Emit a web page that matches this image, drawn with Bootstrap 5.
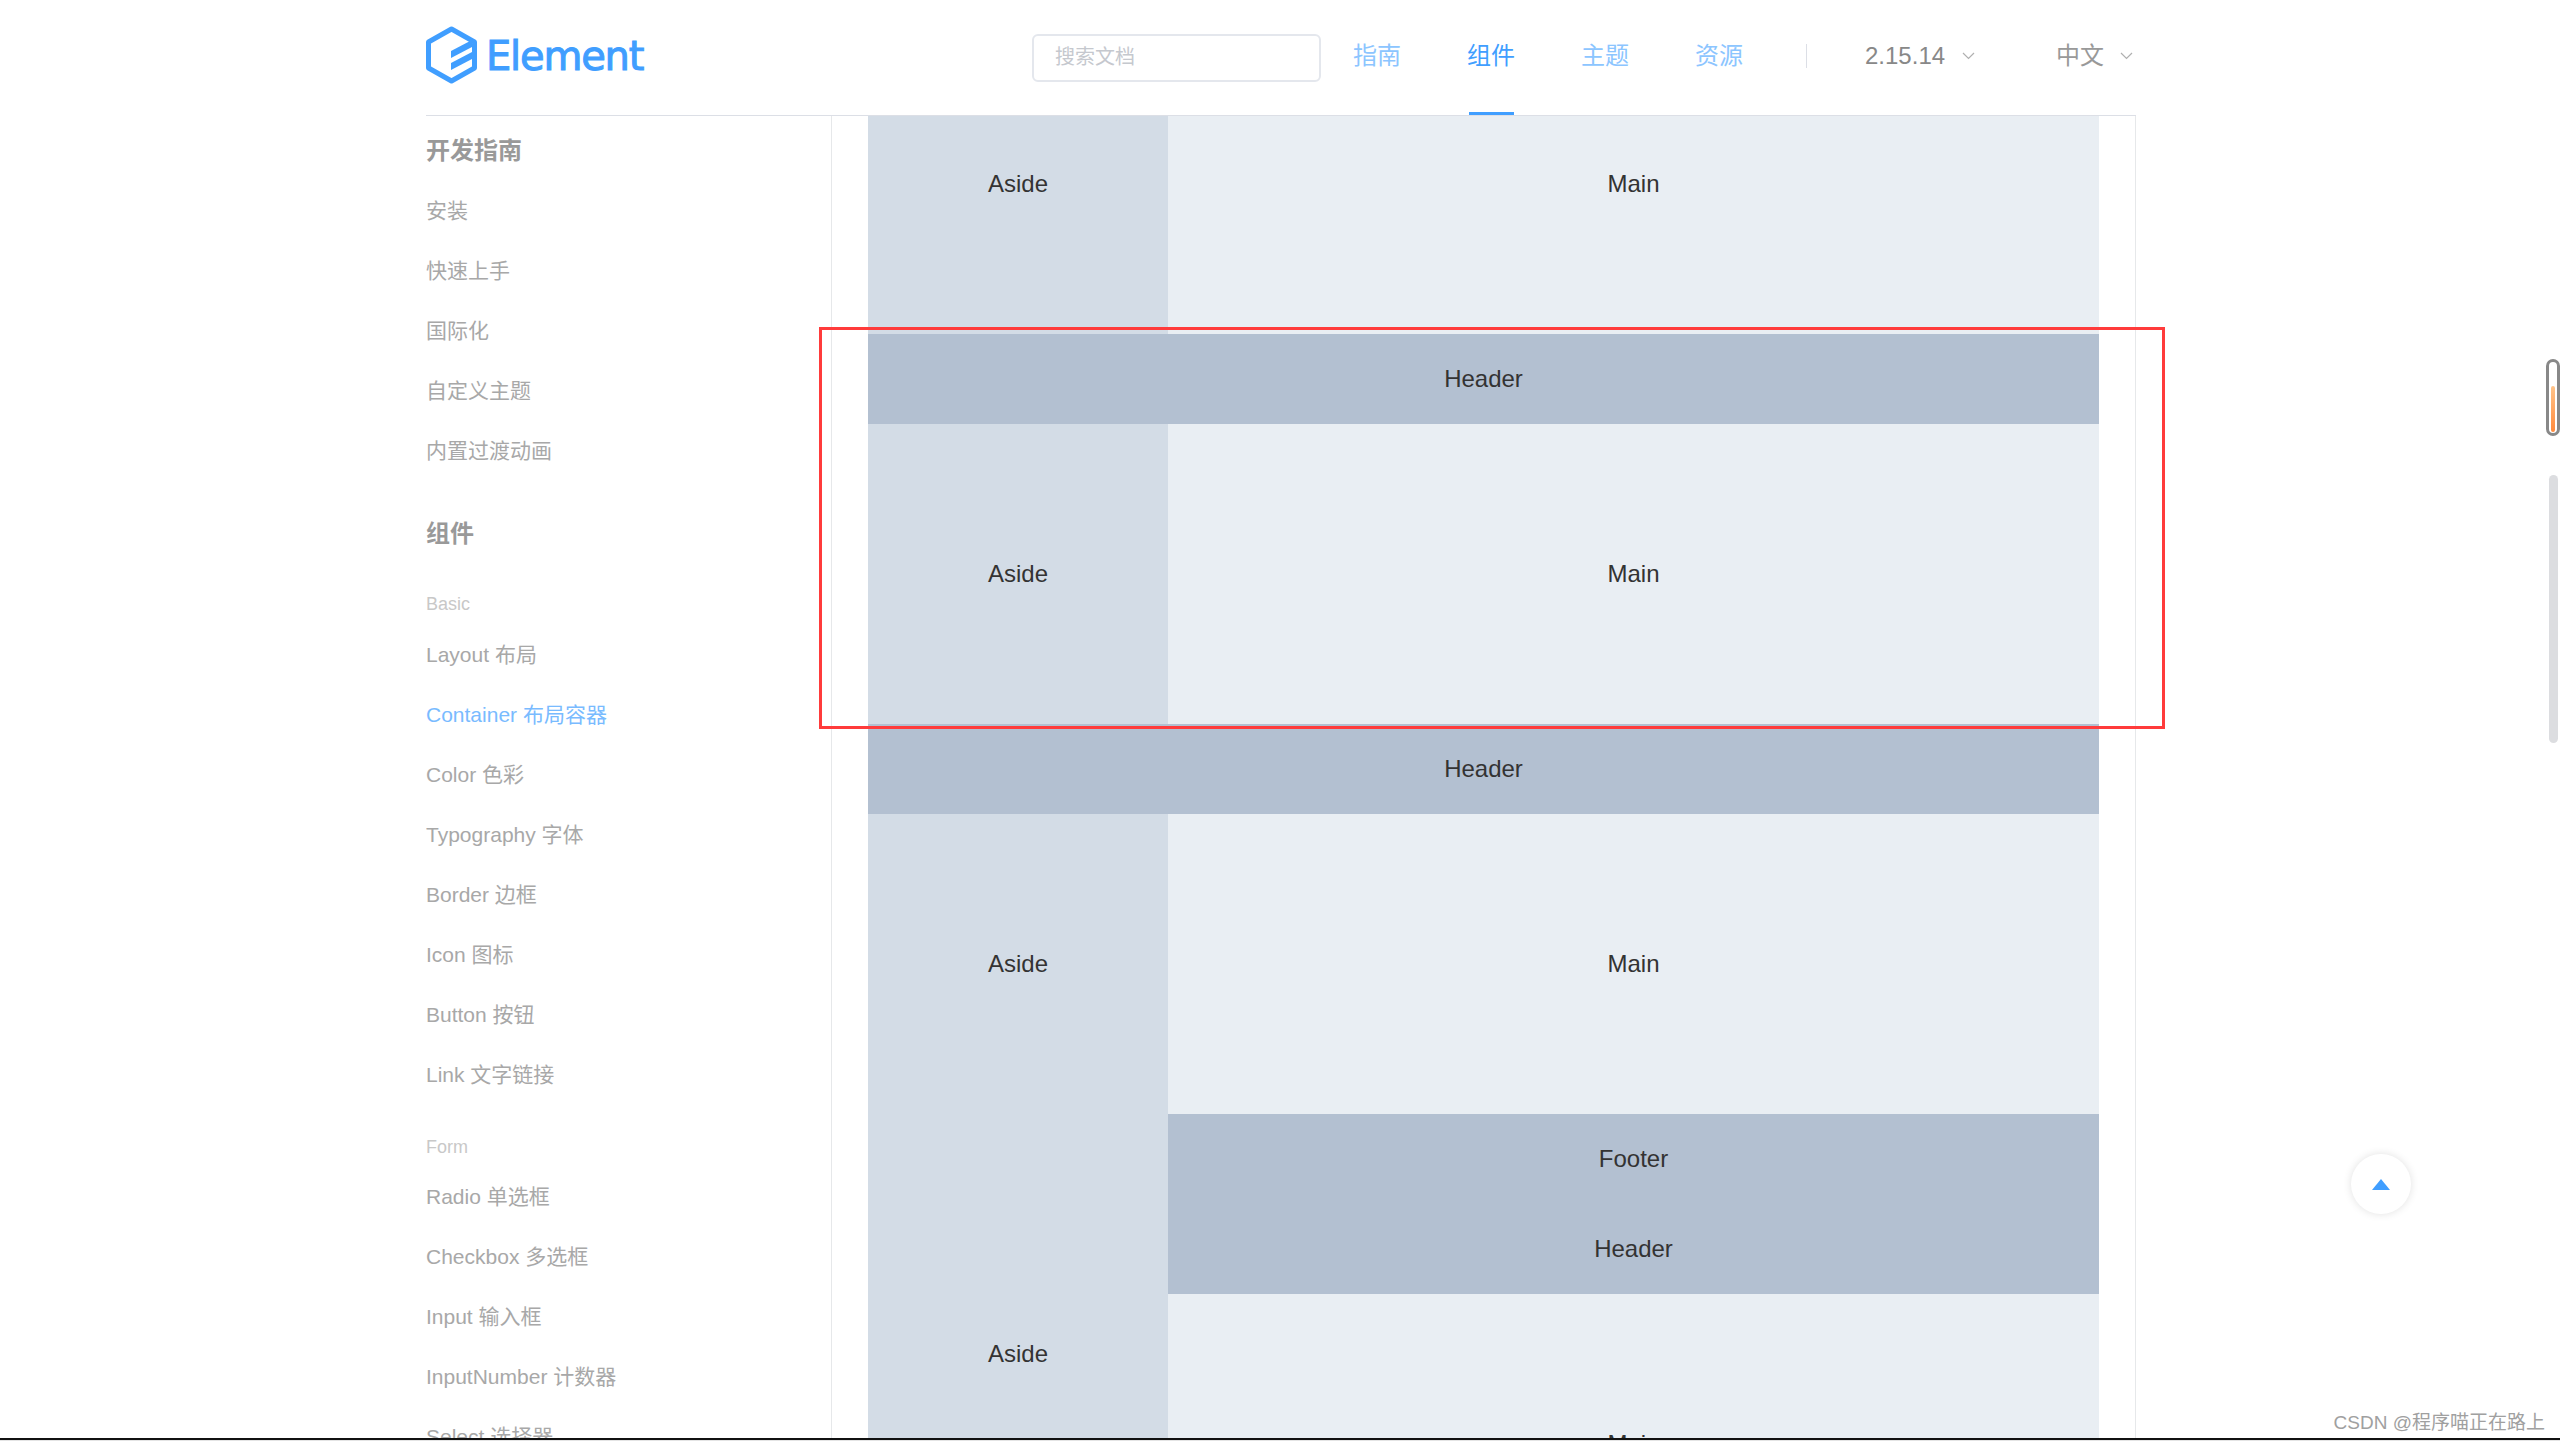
<!DOCTYPE html>
<html lang="zh-CN">
<head>
    <meta charset="UTF-8">
    <title>Element - Container 布局容器</title>
    <link rel="stylesheet" href="https://cdn.jsdelivr.net/npm/bootstrap@5.3.0/dist/css/bootstrap.min.css">
    <style>
        html, body { height: 100%; overflow: hidden; }
        body {
            position: relative;
            background: #fff;
            color: #333;
            font-family: "Liberation Sans", "Noto Sans CJK SC", sans-serif;
            font-size: 24px;
        }
        .el-page { height: 1441px; }
        .el-wrap { width: 1710px; margin-left: 426px; }

        /* top bar */
        .el-top { height: 116px; border-bottom: 1px solid #dcdfe6; }
        .el-logo { width: 606px; }
        .el-logo svg { margin-bottom: 5px; }
        .el-logo-text {
            font-family: "DejaVu Sans", sans-serif;
            font-size: 40px;
            line-height: 1;
            letter-spacing: -1.2px;
            color: #409eff;
            -webkit-text-stroke: 1px #409eff;
            margin-left: 9px;
            margin-bottom: 3px;
        }
        .el-search.form-control {
            width: 289px;
            height: 48px;
            padding: 0 21px;
            font-size: 20px;
            border: 2px solid #e4e7ed;
            border-radius: 6px;
            margin-right: 32px;
        }
        .el-search.form-control::placeholder { color: #c5c8ce; opacity: 1; }
        .el-nav { gap: 66px; margin-right: 63px; }
        .el-nav a { display: block; color: #8cc5ff; text-decoration: none; line-height: 111px; padding-bottom: 4px; position: relative; }
        .el-nav a.el-on { color: #409eff; }
        .el-nav a.el-on::after {
            content: "";
            position: absolute;
            left: 2px;
            right: 1px;
            bottom: 0;
            height: 3px;
            background: #409eff;
        }
        .el-sep { width: 1px; height: 24px; background: #dcdfe6; margin-right: 58px; margin-bottom: 3px; }
        .el-ver { color: #888; gap: 17px; margin-bottom: 3px; }
        .el-lang { color: #999; gap: 16px; margin-left: 81px; margin-bottom: 3px; }

        /* body */
        .el-body { height: 1322px; overflow: hidden; }
        .el-side { width: 406px; flex: none; border-right: 1px solid #e6e8ea; }
        .el-side h5 { font-size: 24px; font-weight: 700; line-height: 60px; color: #999; margin: 0; }
        .el-side h5.el-first { margin-top: 5px; }
        .el-side h5.el-next { margin-top: 23px; }
        .el-side a { display: block; font-size: 21px; line-height: 60px; color: #a8a8a8; text-decoration: none; }
        .el-side a.el-on { color: #79bbff; }
        .el-group { font-size: 18px; line-height: 30px; color: #c8c8c8; margin: 25px 0 6px; }
        .el-group.el-form { margin: 27px 0 5px; }
        .el-content { width: 1304px; flex: none; padding: 0 36px; border-right: 1px solid #e6e8ea; }
        .el-scroll { margin-top: -82px; }
        .el-h, .el-f { height: 90px; line-height: 90px; background: #b3c0d1; text-align: center; }
        .el-a { width: 300px; flex: none; line-height: 300px; background: #d3dce6; text-align: center; }
        .el-m { flex: 1 1 auto; height: 300px; line-height: 300px; background: #e9eef3; text-align: center; }

        /* bottom edge of the capture */
        .el-edge { height: 3px; border-top: 2px solid #111; background: #e4e4e4; }

        /* things lying over the page */
        .el-mark { position: absolute; left: 819px; top: 327px; width: 1346px; height: 402px; border: 3px solid #ff3b3b; pointer-events: none; }
        .el-up {
            position: absolute;
            left: 2351px;
            top: 1154px;
            width: 60px;
            height: 60px;
            background: #fff;
            box-shadow: 0 0 9px rgba(0, 0, 0, .12);
        }
        .el-wm { position: absolute; right: 15px; top: 1411px; font-size: 19px; line-height: 24px; color: #a0a0a0; }
        .el-therm {
            position: absolute;
            left: 2546px;
            top: 359px;
            width: 14px;
            height: 77px;
            border: 3px solid #888;
            border-radius: 7px;
            background: #fff;
        }
        .el-therm i {
            position: absolute;
            left: 2px;
            bottom: 1px;
            width: 4px;
            height: 46px;
            border-radius: 2px;
            background: linear-gradient(#ffc48a, #ff8a3d);
        }
        .el-thumb { position: absolute; left: 2549px; top: 475px; width: 9px; height: 268px; border-radius: 5px; background: #dcdde0; }
    </style>
</head>
<body>
<div class="el-page d-flex flex-column">
    <div class="el-wrap">
        <header class="el-top d-flex align-items-center">
            <div class="el-logo d-flex align-items-center">
                <svg width="51" height="58" viewBox="0 0 51 58">
                    <polygon points="25.5,3 48.5,16 48.5,42 25.5,55 2.5,42 2.5,16" fill="none" stroke="#409eff" stroke-width="5" stroke-linejoin="round"></polygon>
                    <polygon points="25,25 46,14 46,21 25,32" fill="#409eff"></polygon>
                    <polygon points="25,37 46,26 46,33 25,44" fill="#409eff"></polygon>
                </svg>
                <span class="el-logo-text">Element</span>
            </div>
            <input class="el-search form-control" type="text" placeholder="搜索文档">
            <nav class="el-nav d-flex">
                <a href="#">指南</a>
                <a href="#" class="el-on">组件</a>
                <a href="#">主题</a>
                <a href="#">资源</a>
            </nav>
            <span class="el-sep"></span>
            <div class="el-ver d-flex align-items-center">
                <span>2.15.14</span>
                <svg width="13" height="8" viewBox="0 0 13 8"><path d="M1 1l5.5 5.5L12 1" fill="none" stroke="#b0b0b0" stroke-width="1.2"></path></svg>
            </div>
            <div class="el-lang d-flex align-items-center">
                <span>中文</span>
                <svg width="13" height="8" viewBox="0 0 13 8"><path d="M1 1l5.5 5.5L12 1" fill="none" stroke="#b0b0b0" stroke-width="1.2"></path></svg>
            </div>
        </header>
        <div class="el-body d-flex">
            <aside class="el-side">
                <h5 class="el-first">开发指南</h5>
                <a href="#">安装</a>
                <a href="#">快速上手</a>
                <a href="#">国际化</a>
                <a href="#">自定义主题</a>
                <a href="#">内置过渡动画</a>
                <h5 class="el-next">组件</h5>
                <div class="el-group">Basic</div>
                <a href="#">Layout 布局</a>
                <a href="#" class="el-on">Container 布局容器</a>
                <a href="#">Color 色彩</a>
                <a href="#">Typography 字体</a>
                <a href="#">Border 边框</a>
                <a href="#">Icon 图标</a>
                <a href="#">Button 按钮</a>
                <a href="#">Link 文字链接</a>
                <div class="el-group el-form">Form</div>
                <a href="#">Radio 单选框</a>
                <a href="#">Checkbox 多选框</a>
                <a href="#">Input 输入框</a>
                <a href="#">InputNumber 计数器</a>
                <a href="#">Select 选择器</a>
            </aside>
            <main class="el-content">
                <div class="el-scroll">
                    <div class="d-flex">
                        <div class="el-a">Aside</div>
                        <div class="el-m">Main</div>
                    </div>
                    <div>
                        <div class="el-h">Header</div>
                        <div class="d-flex">
                            <div class="el-a">Aside</div>
                            <div class="el-m">Main</div>
                        </div>
                    </div>
                    <div>
                        <div class="el-h">Header</div>
                        <div class="d-flex">
                            <div class="el-a">Aside</div>
                            <div class="flex-grow-1">
                                <div class="el-m">Main</div>
                                <div class="el-f">Footer</div>
                            </div>
                        </div>
                    </div>
                    <div class="d-flex">
                        <div class="el-a">Aside</div>
                        <div class="flex-grow-1">
                            <div class="el-h">Header</div>
                            <div class="el-m">Main</div>
                        </div>
                    </div>
                </div>
            </main>
        </div>
    </div>
</div>
<div class="el-edge position-absolute start-0 end-0 bottom-0"></div>

<div class="el-mark"></div>
<div class="el-therm"><i></i></div>
<div class="el-thumb"></div>
<div class="el-up rounded-circle d-flex align-items-center justify-content-center">
    <svg width="18" height="11" viewBox="0 0 18 11"><polygon points="9,0 18,11 0,11" fill="#409eff"></polygon></svg>
</div>
<div class="el-wm">CSDN @程序喵正在路上</div>

<script src="https://cdn.jsdelivr.net/npm/bootstrap@5.3.0/dist/js/bootstrap.bundle.min.js"></script>
</body>
</html>
